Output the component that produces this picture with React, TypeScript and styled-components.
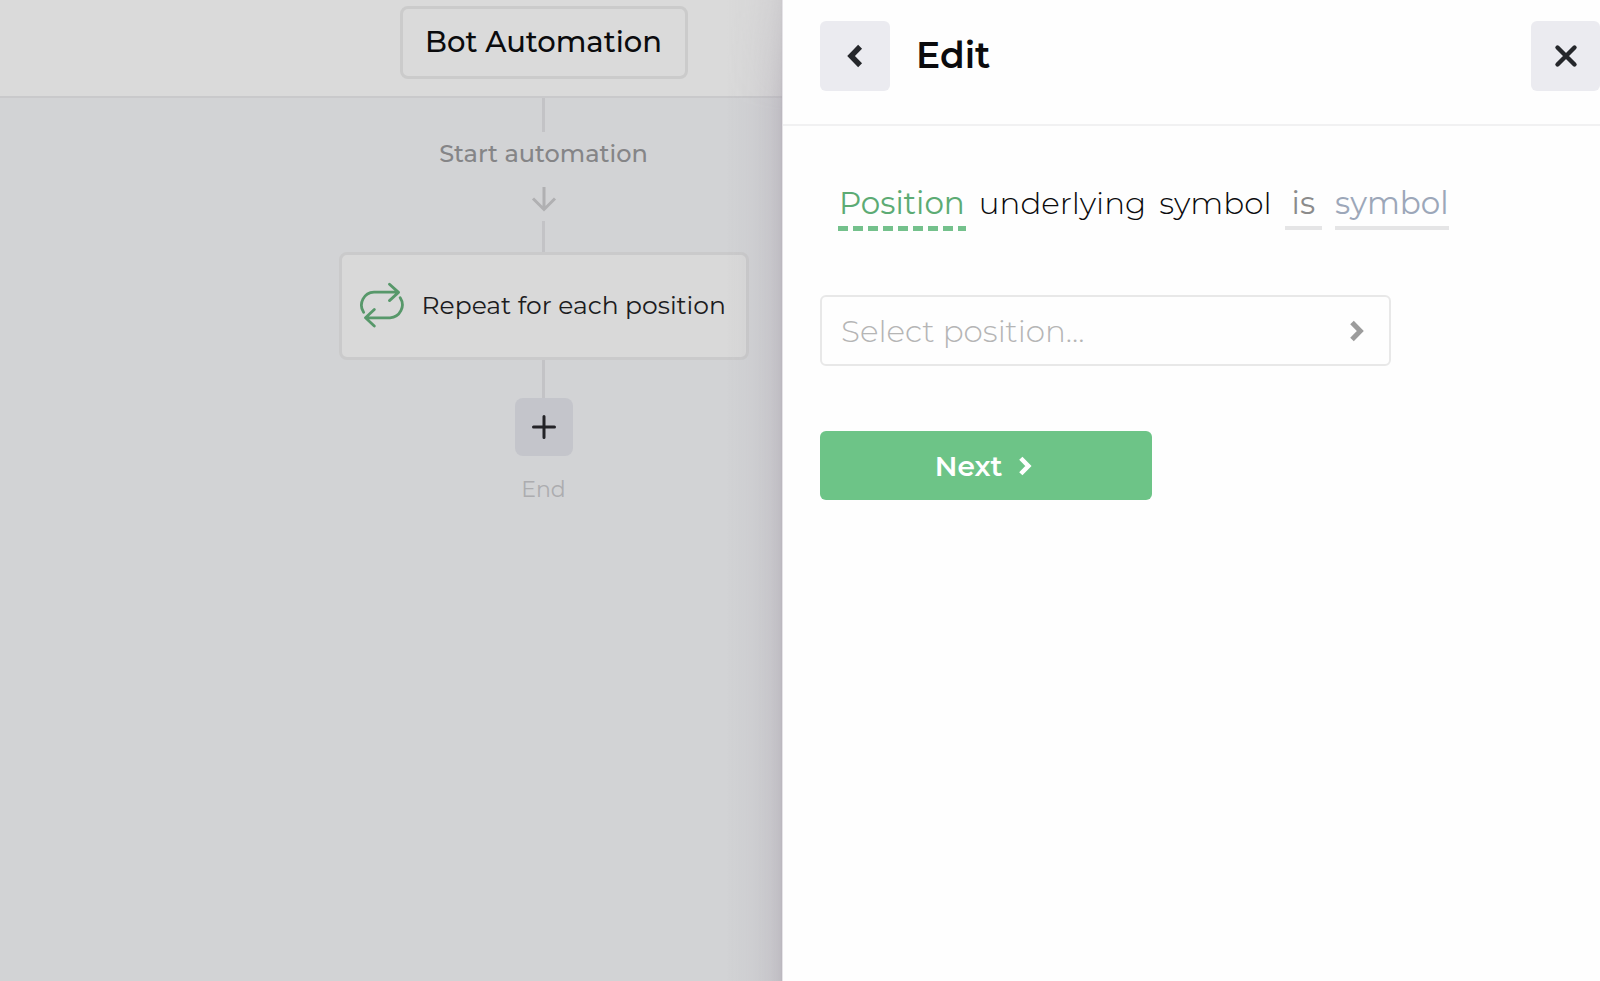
import React from "react";
import styled, { createGlobalStyle } from "styled-components";

const GlobalStyle = createGlobalStyle`
  *, *::before, *::after { box-sizing: border-box; }
  body { margin: 0; background: #fefefe; font-family: Montserrat, Inter, "Liberation Sans", sans-serif; color: #0b0b0d; }
  button, select { font: inherit; color: inherit; }
`;

const Page = styled.div`
  display: grid;
  grid-template-columns: minmax(0, 782fr) minmax(0, 818fr);
  min-height: 100vh;
`;

const Workspace = styled.main`
  position: relative;
  display: flex;
  flex-direction: column;
  background: #d2d3d5;
  &::after {
    content: "";
    position: absolute;
    inset: 0 0 0 auto;
    width: 56px;
    pointer-events: none;
    background: linear-gradient(
      to right,
      rgba(160, 152, 165, 0) 0%,
      rgba(160, 152, 165, 0.07) 45%,
      rgba(160, 152, 165, 0.2) 78%,
      rgba(160, 152, 165, 0.36) 97%,
      rgba(160, 152, 165, 0.5) 100%
    );
    mask-image: linear-gradient(to bottom, rgba(0, 0, 0, 0.5), #000 110px);
  }
`;

const TopBar = styled.header`
  display: flex;
  justify-content: center;
  height: 98px;
  padding: 6px 0 0 305px;
  background: #dadada;
  border-bottom: 2px solid #c9c9cb;
`;

const BotName = styled.button`
  width: 288px;
  height: 73px;
  padding: 0 0 2px;
  background: transparent;
  border: 3px solid #cbcbcb;
  border-radius: 8px;
  font-size: 29px;
  font-weight: 500;
  line-height: 40px;
  white-space: nowrap;
`;

const Flow = styled.section`
  display: flex;
  flex-direction: column;
  align-items: center;
  padding-left: 305px;
`;

const Connector = styled.div<{ $length: number }>`
  width: 3px;
  height: ${(p) => p.$length}px;
  background: #c3c3c6;
`;

const FlowLabel = styled.p<{ $muted?: boolean }>`
  margin: 0;
  font-size: ${(p) => (p.$muted ? 22 : 24)}px;
  font-weight: ${(p) => (p.$muted ? 400 : 500)};
  line-height: 32px;
  color: ${(p) => (p.$muted ? "#acacaf" : "#858587")};
  padding: ${(p) => (p.$muted ? "18px 0 0" : "6px 0 16px")};
`;

const ArrowDown = styled.svg`
  display: block;
  margin-bottom: 9px;
`;

const StepCard = styled.button`
  display: flex;
  align-items: center;
  gap: 17px;
  width: 410px;
  height: 108px;
  padding: 0 0 2px 17px;
  background: #d9d9d9;
  border: 3px solid #cacacb;
  border-radius: 8px;
  font-size: 25px;
  line-height: 32px;
  color: #1c1c1e;
  white-space: nowrap;
`;

const AddButton = styled.button`
  display: grid;
  place-items: center;
  width: 58px;
  height: 58px;
  padding: 0;
  border: 0;
  border-radius: 8px;
  background: #c4c5cb;
  color: #232327;
`;

const Panel = styled.aside`
  background: #fefefe;
  border-left: 1px solid #e6e4e8;
`;

const PanelHeader = styled.header`
  display: flex;
  align-items: center;
  height: 126px;
  padding: 0 0 12px 37px;
  border-bottom: 2px solid #f1f1f2;
`;

const SquareButton = styled.button<{ $width: number }>`
  display: grid;
  place-items: center;
  flex: none;
  width: ${(p) => p.$width}px;
  height: 70px;
  padding: 0;
  border: 0;
  border-radius: 6px;
  background: #ebebf0;
  color: #25272b;
`;

const PanelTitle = styled.h1`
  flex: 1;
  margin: 0 0 0 26px;
  padding-bottom: 2px;
  font-size: 36px;
  font-weight: 600;
  line-height: 44px;
`;

const PanelBody = styled.form`
  display: flex;
  flex-direction: column;
  align-items: flex-start;
  padding: 57px 37px;
`;

const Sentence = styled.div`
  display: flex;
  flex-wrap: wrap;
  gap: 13px;
  margin: 0 0 64px 18px;
  font-size: 31px;
  line-height: 40px;
`;

const Word = styled.span`
  font-weight: 300;
`;

const tokenPadding = { subject: "0 1px 8px", operator: "0 7px 8px", value: "0 0 8px" };
const tokenColor = { subject: "#5cab74", operator: "#8b8b8b", value: "#9ca7b9" };

const Token = styled.button<{ $kind: "subject" | "operator" | "value" }>`
  padding: ${(p) => tokenPadding[p.$kind]};
  border: 0;
  background: ${(p) =>
    p.$kind === "subject"
      ? "repeating-linear-gradient(to right, #74c18c 0 10px, transparent 10px 15px) 0 43px / 100% 5px no-repeat"
      : "linear-gradient(#e5e5e6, #e5e5e6) 0 43px / 100% 4px no-repeat"};
  color: ${(p) => tokenColor[p.$kind]};
`;

const SelectBox = styled.div`
  position: relative;
  width: 100%;
  max-width: 571px;
  margin-bottom: 65px;
  svg {
    position: absolute;
    right: 27px;
    top: 25px;
    color: #9c9c9c;
    pointer-events: none;
  }
`;

const PositionSelect = styled.select`
  display: block;
  appearance: none;
  width: 100%;
  height: 71px;
  padding: 0 60px 0 19px;
  border: 2px solid #e8e8e8;
  border-radius: 6px;
  background: #fefefe;
  font-size: 31px;
  font-weight: 300;
  color: #b5b5b5;
`;

const NextButton = styled.button`
  display: flex;
  align-items: center;
  justify-content: center;
  gap: 17px;
  width: 332px;
  height: 69px;
  padding: 0 5px 0 0;
  border: 0;
  border-radius: 6px;
  background: #6dc487;
  color: #ffffff;
  font-size: 28px;
  font-weight: 600;
`;

function Chevron({ left = false, height = 22 }: { left?: boolean; height?: number }) {
  return (
    <svg width={(height * 14) / 22} height={height} viewBox="0 0 14 22" fill="none" stroke="currentColor" strokeWidth="5" aria-hidden="true">
      <path d={left ? "M12 2.5 3.7 11 12 19.5" : "M2 2.5 10.3 11 2 19.5"} />
    </svg>
  );
}

function RepeatIcon() {
  return (
    <svg width="46" height="46" viewBox="-1 -1 46 46" fill="none" stroke="#57986a" strokeWidth="2.8" strokeLinecap="round" strokeLinejoin="round" aria-hidden="true">
      <path d="M3.6 29.3A13 13 0 0 1 14 9.2H38.3M29.5 1.2 38.5 9.4 29.5 17.6" />
      <path d="M40.2 14.7A13 13 0 0 1 30 34.8H5.7M14.3 26.4 5.5 34.8 14.3 43" />
    </svg>
  );
}

export default function App() {
  return (
    <>
      <GlobalStyle />
      <Page>
        <Workspace>
          <TopBar>
            <BotName type="button">Bot Automation</BotName>
          </TopBar>
          <Flow>
            <Connector $length={34} />
            <FlowLabel>Start automation</FlowLabel>
            <ArrowDown width="26" height="26" viewBox="0 0 26 26" fill="none" stroke="#b0b0b2" strokeWidth="3" aria-hidden="true">
              <path d="M13 1V23M2 12.5 13 23.5 24 12.5" />
            </ArrowDown>
            <Connector $length={31} />
            <StepCard type="button">
              <RepeatIcon />
              Repeat for each position
            </StepCard>
            <Connector $length={38} />
            <AddButton type="button" aria-label="Add step">
              <svg width="24" height="24" viewBox="0 0 24 24" fill="none" stroke="currentColor" strokeWidth="3" strokeLinecap="round" aria-hidden="true">
                <path d="M12 1.5V22.5M1.5 12H22.5" />
              </svg>
            </AddButton>
            <FlowLabel $muted>End</FlowLabel>
          </Flow>
        </Workspace>
        <Panel>
          <PanelHeader>
            <SquareButton type="button" aria-label="Back" $width={70}>
              <Chevron left height={24} />
            </SquareButton>
            <PanelTitle>Edit</PanelTitle>
            <SquareButton type="button" aria-label="Close" $width={69}>
              <svg width="24" height="24" viewBox="0 0 24 24" fill="none" stroke="currentColor" strokeWidth="4.4" strokeLinecap="round" aria-hidden="true">
                <path d="M3.5 3.5 20.5 20.5M20.5 3.5 3.5 20.5" />
              </svg>
            </SquareButton>
          </PanelHeader>
          <PanelBody onSubmit={(e) => e.preventDefault()}>
            <Sentence>
              <Token type="button" $kind="subject">Position</Token>
              <Word>underlying</Word>
              <Word>symbol</Word>
              <Token type="button" $kind="operator">is</Token>
              <Token type="button" $kind="value">symbol</Token>
            </Sentence>
            <SelectBox>
              <PositionSelect aria-label="Position" defaultValue="">
                <option value="">Select position...</option>
              </PositionSelect>
              <Chevron />
            </SelectBox>
            <NextButton type="submit">
              Next
              <Chevron height={20} />
            </NextButton>
          </PanelBody>
        </Panel>
      </Page>
    </>
  );
}
